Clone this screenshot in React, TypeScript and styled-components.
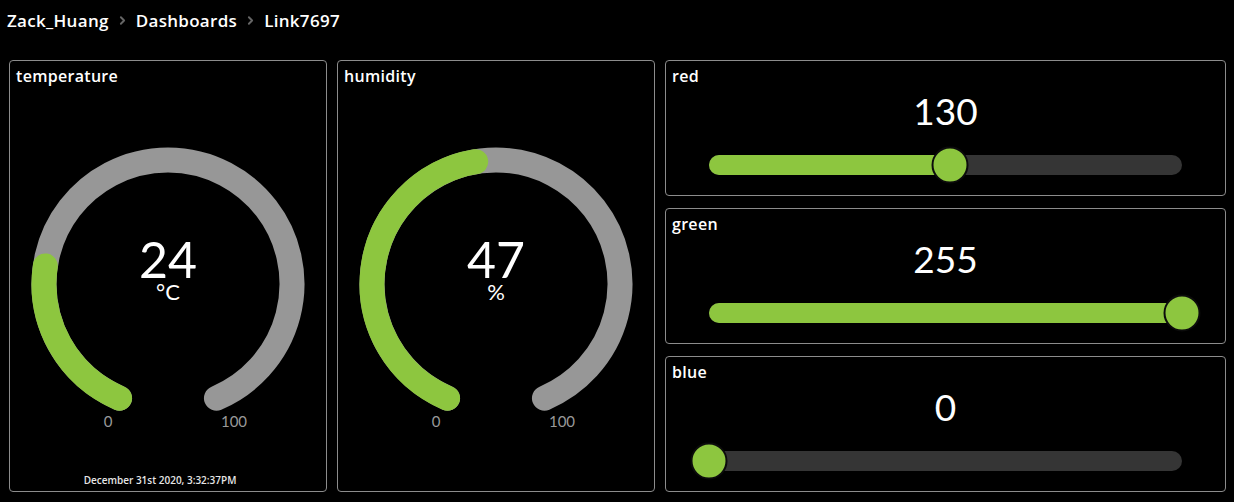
import React from "react";
import styled, { createGlobalStyle } from "styled-components";
import { ChevronRight } from "lucide-react";

const GREEN = "#8dc63f";
const ARC_GRAY = "#979797";
const LABEL_FONT = `"Open Sans", "Lato", sans-serif`;

const GlobalStyle = createGlobalStyle`
  html, body {
    margin: 0;
    padding: 0;
    background: #000;
    color: #fff;
    font-family: "Lato", "Open Sans", sans-serif;
  }
`;

const Page = styled.div`
  width: 1234px;
  height: 502px;
  background: #000;
  overflow: hidden;
`;

// 面包屑导航
const Breadcrumb = styled.nav`
  height: 40px;
  padding: 0 7px;
  display: flex;
  align-items: center;
  gap: 7px;
  font-family: ${LABEL_FONT};
  font-size: 17px;
  font-weight: 600;
  letter-spacing: 0.3px;
`;

const Crumb = styled.span`
  color: #fff;
`;

const Sep = styled.span`
  display: flex;
  align-items: center;
  color: #666;
`;

const Grid = styled.div`
  display: grid;
  grid-template-columns: 318px 318px 1fr;
  column-gap: 10px;
  padding: 20px 8px 0 9px;
  height: 432px;
`;

const SliderColumn = styled.div`
  display: grid;
  grid-template-rows: repeat(3, 1fr);
  row-gap: 12px;
`;

const Card = styled.div`
  border: 1px solid #8c8c8c;
  border-radius: 4px;
  display: flex;
  flex-direction: column;
  min-height: 0;
`;

const Title = styled.div`
  height: 28px;
  padding: 5px 6px 0;
  box-sizing: border-box;
  font-family: ${LABEL_FONT};
  font-size: 16px;
  font-weight: 600;
  line-height: 21px;
  letter-spacing: 0.3px;
`;

// 仪表盘
const GaugeBox = styled.div`
  position: relative;
  width: 280px;
  height: 300px;
  margin: 55px auto 0;
`;

const Readout = styled.div`
  position: absolute;
  left: 0;
  right: 0;
  top: 95px;
  display: flex;
  flex-direction: column;
  align-items: center;
  pointer-events: none;
`;

const BigValue = styled.div<{ $size: number }>`
  font-size: ${(p) => p.$size}px;
  font-weight: 400;
  line-height: 0.8;
`;

const Unit = styled.div`
  font-size: 22px;
  font-weight: 400;
  line-height: 1;
  margin-top: 2px;
`;

const Stamp = styled.div`
  margin-top: auto;
  padding: 0 16px 4px 0;
  text-align: center;
  font-family: ${LABEL_FONT};
  font-size: 10px;
  font-weight: 600;
  color: #e6e6e6;
`;

// 滑块
const SliderValue = styled(BigValue)`
  text-align: center;
  line-height: 1;
  margin-top: 3px;
`;

const TrackRow = styled.div`
  position: relative;
  height: 40px;
  margin: 16px 43px 0;
  display: flex;
  align-items: center;
`;

const Track = styled.div`
  position: relative;
  width: 100%;
  height: 20px;
  border-radius: 10px;
  background: #353535;
`;

const Fill = styled.div`
  height: 100%;
  border-radius: 10px;
  background: ${GREEN};
`;

const Thumb = styled.div`
  position: absolute;
  top: 50%;
  width: 37px;
  height: 37px;
  box-sizing: border-box;
  border-radius: 50%;
  background: ${GREEN};
  border: 2px solid #0c0c0c;
  transform: translate(-50%, -50%);
`;

const polar = (cx: number, cy: number, r: number, deg: number) => {
  const a = (deg * Math.PI) / 180;
  return [cx + r * Math.sin(a), cy - r * Math.cos(a)];
};

const arc = (cx: number, cy: number, r: number, a0: number, a1: number) => {
  const [x0, y0] = polar(cx, cy, r, a0);
  const [x1, y1] = polar(cx, cy, r, a1);
  const large = a1 - a0 > 180 ? 1 : 0;
  return `M ${x0} ${y0} A ${r} ${r} 0 ${large} 1 ${x1} ${y1}`;
};

const SPAN = 157;

const Gauge = (props: { title: string; value: number; unit: string; stamp?: string }) => {
  const end = -SPAN + (2 * SPAN * props.value) / 100;
  return (
    <Card>
      <Title>{props.title}</Title>
      <GaugeBox>
        <svg width="280" height="300" viewBox="0 0 280 300">
          <path d={arc(140, 140, 124, -SPAN, SPAN)} stroke={ARC_GRAY} strokeWidth="25" fill="none" strokeLinecap="round" />
          <path d={arc(140, 140, 124, -SPAN, end)} stroke={GREEN} strokeWidth="25" fill="none" strokeLinecap="round" />
          <text x="80" y="283" textAnchor="middle" fill="#999" fontSize="15" fontFamily="Lato, sans-serif">0</text>
          <text x="206" y="283" textAnchor="middle" fill="#999" fontSize="15" fontFamily="Lato, sans-serif">100</text>
        </svg>
        <Readout>
          <BigValue $size={50}>{props.value}</BigValue>
          <Unit>{props.unit}</Unit>
        </Readout>
      </GaugeBox>
      {props.stamp && <Stamp>{props.stamp}</Stamp>}
    </Card>
  );
};

const Slider = (props: { title: string; value: number }) => {
  const pct = (props.value / 255) * 100;
  return (
    <Card>
      <Title>{props.title}</Title>
      <SliderValue $size={37}>{props.value}</SliderValue>
      <TrackRow>
        <Track>
          <Fill style={{ width: `${pct}%` }} />
          <Thumb style={{ left: `${pct}%` }} />
        </Track>
      </TrackRow>
    </Card>
  );
};

export default function App() {
  return (
    <Page>
      <GlobalStyle />
      <Breadcrumb>
        <Crumb>Zack_Huang</Crumb>
        <Sep><ChevronRight size={13} strokeWidth={3.5} /></Sep>
        <Crumb>Dashboards</Crumb>
        <Sep><ChevronRight size={13} strokeWidth={3.5} /></Sep>
        <Crumb>Link7697</Crumb>
      </Breadcrumb>
      <Grid>
        <Gauge title="temperature" value={24} unit="°C" stamp="December 31st 2020, 3:32:37PM" />
        <Gauge title="humidity" value={47} unit="%" />
        <SliderColumn>
          <Slider title="red" value={130} />
          <Slider title="green" value={255} />
          <Slider title="blue" value={0} />
        </SliderColumn>
      </Grid>
    </Page>
  );
}
